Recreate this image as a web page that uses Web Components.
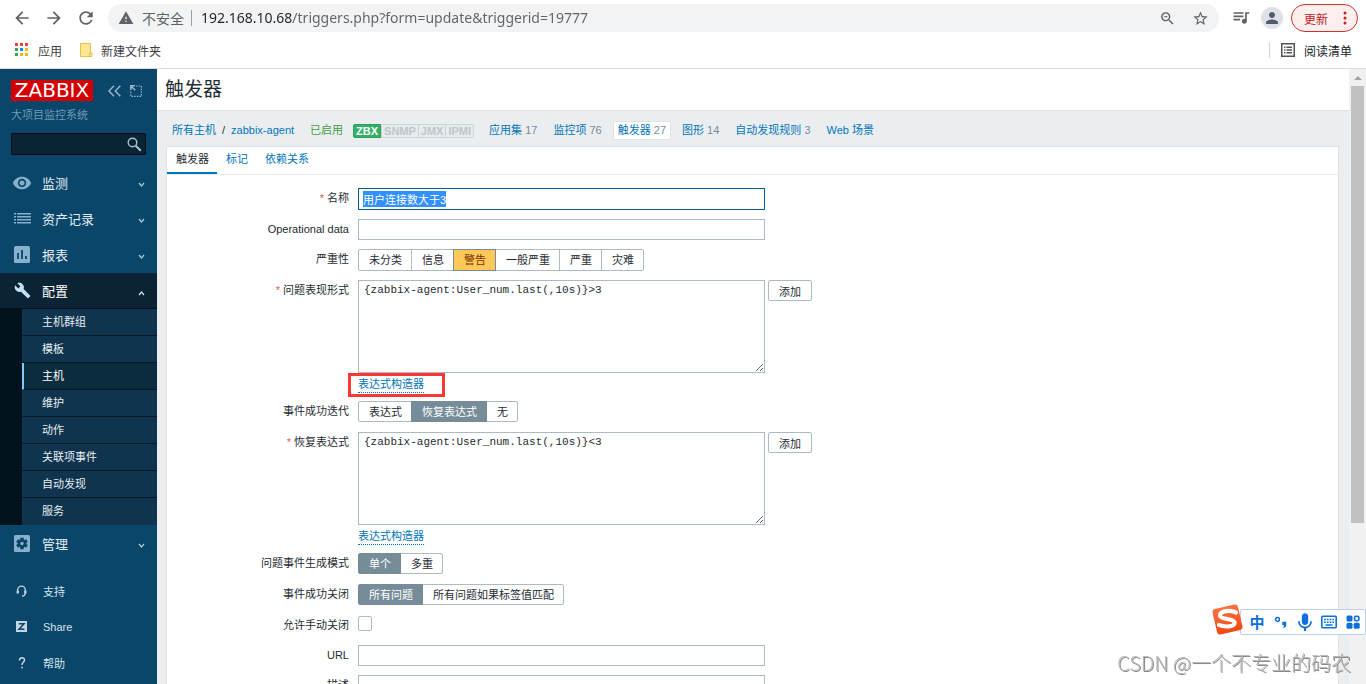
<!DOCTYPE html>
<html lang="zh-CN">
<head>
<meta charset="utf-8">
<title>触发器</title>
<style>
  html, body { height: 100%; margin: 0; }
  body {
    font-family: "Liberation Sans", "Noto Sans CJK SC", sans-serif;
    font-size: 11px;
    color: #1f2c33;
    overflow: hidden;
    --link: #0275b8;
    --line: #dfe4e7;
    --control: #acbbc2;
    --muted: #768d99;
  }
</style>
</head>
<body>
<app-window>
  <browser-toolbar slot="chrome"></browser-toolbar>
  <bookmark-bar slot="chrome"></bookmark-bar>
  <side-bar slot="side"></side-bar>
  <page-title>触发器</page-title>
  <host-nav></host-nav>
  <trigger-form></trigger-form>
  <scroll-track slot="scroll"></scroll-track>
</app-window>
<water-mark>CSDN @一个不专业的码农</water-mark>
<ime-bar></ime-bar>

<script>
const define = (name, html) => {
  const template = document.createElement('template');
  template.innerHTML = `<style>:host,*{box-sizing:border-box}a{color:inherit;text-decoration:none}button{font:inherit;color:inherit;background:none;border:0;padding:0;margin:0}ul{list-style:none;margin:0;padding:0}svg{display:block;flex:none}</style>` + html;
  customElements.define(name, class extends HTMLElement {
    constructor() {
      super();
      this.attachShadow({ mode: 'open' }).append(template.content.cloneNode(true));
    }
    connectedCallback() {
      const field = this.shadowRoot.querySelector('[data-selected]');
      if (field) { field.focus(); field.select(); }
    }
  });
};

define('app-window', `
<style>
  :host { display: grid; grid-template-rows: auto 1fr; height: 100vh; }
  .chrome { border-bottom: 1px solid #dadce0; background: #fff; }
  .body { display: grid; grid-template-columns: 157px 1fr auto; min-height: 0; overflow: hidden; background: #ebeef0; }
  main { min-width: 0; overflow: hidden; display: flex; flex-direction: column; }
</style>
<header class="chrome"><slot name="chrome"></slot></header>
<div class="body">
  <slot name="side"></slot>
  <main><slot></slot></main>
  <slot name="scroll"></slot>
</div>`);

define('browser-toolbar', `
<style>
  :host { display: flex; align-items: center; height: 36px; padding: 0 8px 0 12px; color: #5f6368; font-size: 14px; }
  .nav { display: flex; gap: 12px; margin-right: 12px; }
  .box { flex: 1; display: flex; align-items: center; height: 28px; border-radius: 14px; background: #f1f3f4; padding: 0 10px; min-width: 0; }
  .warn { margin-right: 8px; }
  .sep { width: 1px; height: 16px; background: #9aa0a6; margin: 0 9px 0 7px; }
  input { flex: 1; min-width: 0; border: 0; outline: 0; padding: 0; font: 14px/20px "Noto Sans", sans-serif;
    background: linear-gradient(90deg, #202124 92px, #5f6368 92px); -webkit-background-clip: text; background-clip: text; -webkit-text-fill-color: transparent; }
  .tools { display: flex; gap: 16px; }
  .queue { margin: 0 10px 0 12px; }
  .avatar { width: 22px; height: 22px; border-radius: 50%; background: #dee1e6; display: grid; place-items: center; color: #525c6e; margin-right: 8px; }
  .update { display: flex; align-items: center; justify-content: space-between; width: 67px; height: 28px; border: 1px solid #d0312d; border-radius: 14px; background: #fcefee; color: #c5221f; font-size: 12px; padding: 0 10px 0 12px; }
</style>
<div class="nav">
  <button aria-label="后退"><svg width="20" height="20" viewBox="0 0 24 24" fill="currentColor"><path d="M20 11H7.83l5.59-5.59L12 4l-8 8 8 8 1.41-1.41L7.83 13H20v-2z"/></svg></button>
  <button aria-label="前进"><svg width="20" height="20" viewBox="0 0 24 24" fill="currentColor"><path d="M12 4l-1.41 1.41L16.17 11H4v2h12.17l-5.58 5.59L12 20l8-8z"/></svg></button>
  <button aria-label="刷新"><svg width="20" height="20" viewBox="0 0 24 24" fill="currentColor"><path d="M17.65 6.35C16.2 4.9 14.21 4 12 4c-4.42 0-7.99 3.58-7.99 8s3.57 8 7.99 8c3.73 0 6.84-2.55 7.73-6h-2.08c-.82 2.33-3.04 4-5.65 4-3.31 0-6-2.69-6-6s2.69-6 6-6c1.66 0 3.14.69 4.22 1.78L13 11h7V4l-2.35 2.35z"/></svg></button>
</div>
<div class="box">
  <svg class="warn" width="16" height="16" viewBox="0 0 24 24" fill="currentColor"><path d="M1 21h22L12 2 1 21zm12-3h-2v-2h2v2zm0-4h-2v-4h2v4z"/></svg>
  <span>不安全</span><span class="sep"></span>
  <input aria-label="地址" value="192.168.10.68/triggers.php?form=update&amp;triggerid=19777">
  <div class="tools">
    <button aria-label="缩放"><svg width="17" height="17" viewBox="0 0 24 24" fill="currentColor"><path d="M15.5 14h-.79l-.28-.27C15.41 12.59 16 11.11 16 9.5 16 5.91 13.09 3 9.5 3S3 5.91 3 9.5 5.91 16 9.5 16c1.61 0 3.09-.59 4.23-1.57l.27.28v.79l5 4.99L20.49 19l-4.99-5zm-6 0C7.01 14 5 11.99 5 9.5S7.01 5 9.5 5 14 7.01 14 9.5 11.99 14 9.5 14zM7 8.7h5v1.6H7z"/></svg></button>
    <button aria-label="收藏"><svg width="17" height="17" viewBox="0 0 24 24" fill="currentColor"><path d="M22 9.24l-7.19-.62L12 2 9.19 8.63 2 9.24l5.46 4.73L5.82 21 12 17.27 18.18 21l-1.63-7.03L22 9.24zM12 15.4l-3.76 2.27 1-4.28-3.32-2.88 4.38-.38L12 6.1l1.71 4.04 4.38.38-3.32 2.88 1 4.28L12 15.4z"/></svg></button>
  </div>
</div>
<button class="queue" aria-label="媒体"><svg width="20" height="20" viewBox="0 0 24 24" fill="currentColor"><path d="M15 5H3v2h12V5zm0 4H3v2h12V9zM3 15h8v-2H3v2zM17 5v8.18c-.31-.11-.65-.18-1-.18-1.66 0-3 1.34-3 3s1.34 3 3 3 3-1.34 3-3V7h3V5h-5z"/></svg></button>
<button class="avatar" aria-label="用户"><svg width="18" height="18" viewBox="0 0 24 24" fill="currentColor"><path d="M12 12c2.21 0 4-1.79 4-4s-1.79-4-4-4-4 1.79-4 4 1.79 4 4 4zm0 2c-2.67 0-8 1.34-8 4v2h16v-2c0-2.66-5.33-4-8-4z"/></svg></button>
<button class="update">更新<svg width="4" height="14" viewBox="0 0 4 14" fill="currentColor"><circle cx="2" cy="2" r="1.5"/><circle cx="2" cy="7" r="1.5"/><circle cx="2" cy="12" r="1.5"/></svg></button>`);

define('bookmark-bar', `
<style>
  :host { display: flex; align-items: center; height: 32px; padding: 0 14px 4px; font-size: 12px; color: #3c4043; }
  a { display: flex; align-items: center; }
  .apps { gap: 10px; margin-right: 18px; }
  .folder { gap: 8px; }
  .reading { gap: 9px; margin-left: auto; padding-left: 11px; border-left: 1px solid #d0d2d5; height: 16px; color: #202124; }
</style>
<a class="apps" href="#"><svg width="14" height="14" viewBox="0 0 14 14"><path fill="#ea4335" d="M1 0h3v3H1zM6 0h3v3H6zM11 0h3v3h-3z"/><path fill="#34a853" d="M1 5h3v3H1zM1 10h3v3H1z"/><path fill="#1a8cff" d="M6 5h3v3H6z"/><path fill="#fbbc05" d="M11 5h3v3h-3zM6 10h3v3H6zM11 10h3v3h-3z"/></svg>应用</a>
<a class="folder" href="#"><svg width="13" height="14" viewBox="0 0 13 14"><path d="M.5.5h10v9.500h1.500v3.500H.5z" fill="#ffe793" stroke="#e8c04c"/><path d="M9.500 13.500v-3.500h1" fill="none" stroke="#e8c04c"/></svg>新建文件夹</a>
<a class="reading" href="#"><svg width="14" height="14" viewBox="0 0 14 14" fill="#50545a"><path d="M0 0h14v14H0zM1.500 1.500v11h11v-11z" fill-rule="evenodd"/><path d="M3 3.500h1.500V5H3zM5.500 3.500H11V5H5.500zM3 6.300h1.500v1.500H3zM5.500 6.300H11v1.500H5.500zM3 9h1.500v1.500H3zM5.500 9H11v1.500H5.500z"/></svg>阅读清单</a>`);

define('menu-item', `
<style>
  :host { display: block; }
  a { display: flex; align-items: center; height: 35px; padding: 0 11px 0 12px; font-size: 13px; color: #e2edf4; }
  .icon { width: 20px; margin-right: 10px; color: #86b0cb; display: grid; place-items: center; }
  .label { flex: 1; }
  .arrow { margin-top: 4px; color: #a9c8dc; }
  :host([open]) a { background: #0a2435; color: #fff; }
  :host([open]) .icon, :host([open]) .arrow { color: #c3dff2; }
  :host([open]) .arrow { transform: rotate(180deg); }
  :host([small]) a { font-size: 11px; color: #d3e3ed; padding-left: 12px; }
  :host([small]) .icon { width: 19px; margin-right: 12px; color: #c1d7e4; }
  :host([small]) .arrow { display: none; }
</style>
<a href="#"><span class="icon"><slot name="icon"></slot></span><span class="label"><slot></slot></span>
<svg class="arrow" width="9" height="6" viewBox="0 0 9 6" fill="none" stroke="currentColor" stroke-width="1.300"><path d="M2 1l2.500 3L7 1"/></svg></a>`);

define('side-bar', `
<style>
  :host { display: flex; flex-direction: column; background: #0a466a; padding-top: 11px; overflow: hidden; }
  .brand { display: flex; align-items: center; height: 21px; padding-left: 11px; color: #8fb6ce; }
  .logo { width: 82px; height: 21px; background: #d40000; color: #fff; font: 20px/21px "DejaVu Sans", sans-serif; text-align: center; margin-right: 15px; }
  .brand button + button { margin-left: 9px; }
  .server { padding-left: 11px; line-height: 16px; margin: 6px 0 10px; color: #6d9bb6; }
  form { display: flex; align-items: center; margin: 0 11px 10px; height: 22px; background: #082435; border: 1px solid #020c13; border-radius: 2px; color: #a9c2d1; padding-right: 3px; }
  form input { flex: 1; min-width: 0; height: 20px; background: none; border: 0; outline: 0; padding: 0 4px; font: inherit; color: #fff; }
  nav { display: flex; flex-direction: column; gap: 1px; }
  .sub { background: #02131e; padding: 1px 0 0 22px; }
  .sub a { display: block; height: 27px; line-height: 26px; padding-left: 20px; background: #10344e; border-bottom: 1px solid #04192a; color: #e6eef4; }
  .sub li[aria-current] a { background: #0b2b3f; border-left: 2px solid #84c8f5; padding-left: 18px; color: #fff; }
  .sub li:last-child a { border-bottom-color: #10344e; }
  .foot { margin-top: 11px; }
</style>
<div class="brand">
  <a class="logo" href="#">ZABBIX</a>
  <button aria-label="折叠"><svg width="13" height="12" viewBox="0 0 13 12" fill="none" stroke="currentColor" stroke-width="1.500"><path d="M6 .8L1 6l5 5.200M12.300.8L7.300 6l5 5.200"/></svg></button>
  <button aria-label="全屏"><svg width="12" height="12" viewBox="0 0 12 12" fill="none" stroke="currentColor" stroke-width="1.200"><path d="M6 1h5.400v10.400H.8V6.500" stroke-dasharray="1.500 1.200"/><path d="M1.200 1.200l4 4M.8 5V.8H5" stroke-width="1.500"/></svg></button>
</div>
<div class="server">大项目监控系统</div>
<form><input type="search" aria-label="搜索"><svg width="15" height="15" viewBox="0 0 15 15" fill="none" stroke="currentColor"><circle cx="5.500" cy="5.500" r="4.300" stroke-width="1.400"/><path d="M8.800 8.800l5 5" stroke-width="2"/></svg></form>
<nav>
  <menu-item><svg slot="icon" width="20" height="20" viewBox="0 0 24 24" fill="currentColor"><path d="M12 4.500C7 4.500 2.730 7.610 1 12c1.730 4.390 6 7.500 11 7.500s9.270-3.110 11-7.500c-1.730-4.390-6-7.500-11-7.500zM12 17c-2.760 0-5-2.240-5-5s2.240-5 5-5 5 2.240 5 5-2.240 5-5 5zm0-8c-1.660 0-3 1.340-3 3s1.340 3 3 3 3-1.340 3-3-1.340-3-3-3z"/></svg>监测</menu-item>
  <menu-item><svg slot="icon" width="17" height="11" viewBox="0 0 17 11" fill="currentColor"><path d="M0 0h2v1.400H0zM3 0h14v1.400H3zM0 3h2v1.400H0zM3 3h14v1.400H3zM0 6h2v1.400H0zM3 6h14v1.400H3zM0 9h2v1.400H0zM3 9h14v1.400H3z"/></svg>资产记录</menu-item>
  <menu-item><svg slot="icon" width="16" height="17" viewBox="0 0 16 17"><rect width="16" height="17" rx="1.500" fill="currentColor"/><path d="M4 7v6M8 4v9M12 10v3" stroke="#0a466a" stroke-width="1.800"/></svg>报表</menu-item>
  <div>
    <menu-item open><svg slot="icon" width="17" height="17" viewBox="0 0 24 24" fill="currentColor"><path d="M22.700 19l-9.100-9.100c.9-2.300.4-5-1.500-6.900-2-2-5-2.400-7.400-1.300L9 6 6 9 1.600 4.700C.4 7.100.9 10.100 2.900 12.100c1.900 1.900 4.600 2.400 6.900 1.500l9.100 9.100c.4.400 1 .4 1.400 0l2.300-2.300c.5-.4.5-1.100.1-1.400z"/></svg>配置</menu-item>
    <ul class="sub">
      <li><a href="#">主机群组</a></li><li><a href="#">模板</a></li><li aria-current="page"><a href="#">主机</a></li><li><a href="#">维护</a></li>
      <li><a href="#">动作</a></li><li><a href="#">关联项事件</a></li><li><a href="#">自动发现</a></li><li><a href="#">服务</a></li>
    </ul>
  </div>
  <menu-item><svg slot="icon" width="16" height="17" viewBox="0 0 16 17"><rect width="16" height="17" rx="1.500" fill="currentColor"/><g stroke="#0a466a" stroke-width="3.400"><path d="M8 2.700v11.600M3 5.600l10 5.800M3 11.400l10-5.800"/></g><circle cx="8" cy="8.500" r="4.400" fill="#0a466a"/><circle cx="8" cy="8.500" r="1.700" fill="#86b0cb"/></svg>管理</menu-item>
  <menu-item small class="foot"><svg slot="icon" width="11" height="12" viewBox="0 0 11 12" fill="none" stroke="currentColor" stroke-width="1.300"><path d="M1.700 8V5a3.800 3.800 0 0 1 7.600 0v3c0 2-1 3-3.300 3"/><path d="M1.700 5.500v3M9.300 5.500v3" stroke-width="2.200"/></svg>支持</menu-item>
  <menu-item small><svg slot="icon" width="11" height="11" viewBox="0 0 11 11"><rect width="11" height="11" fill="currentColor"/><path d="M2.800 2.800h5.200L3 8.200h5.400" fill="none" stroke="#0a466a" stroke-width="1.500"/></svg>Share</menu-item>
  <menu-item small><svg slot="icon" width="8" height="12" viewBox="0 0 8 12" fill="none" stroke="currentColor" stroke-width="1.500"><path d="M1.500 3.500C1.500 0 6.500 0 6.500 3.200 6.500 5 4 5.300 4 8M4 9.800v1.700"/></svg>帮助</menu-item>
</nav>`);

define('page-title', `
<style>
  :host { display: block; flex: none; height: 42px; background: #fff; border-bottom: 1px solid var(--line); padding-left: 8px; }
  h1 { margin: 0; font-size: 19px; line-height: 41px; font-weight: 400; }
</style>
<h1><slot></slot></h1>`);

define('host-nav', `
<style>
  :host { display: flex; flex: none; align-items: center; gap: 6px; height: 35px; padding: 4px 10px 0; color: var(--link); }
  .item { border: 1px solid transparent; padding: 0 4px; line-height: 17px; white-space: nowrap; }
  .item span { color: var(--muted); }
  .on { background: #fff; border-color: var(--line); }
  .path { display: flex; gap: 6px; }
  .path span { color: #1f2c33; }
  .enabled { color: #429e47; }
  .status { display: flex; font-weight: 700; line-height: 12px; color: #bcc6cb; border: 1px solid #ccd5d9; border-radius: 2px; background: #e8ebec; margin: 0 4px 0 -1px; }
  .status span { padding: 0 2px; border-left: 1px solid #ccd5d9; }
  .status .ok { background: #34af67; color: #fff; border: 1px solid #2f9f5e; margin: -1px 0 -1px -1px; border-radius: 2px 0 0 2px; }
</style>
<div class="item path"><a href="#">所有主机</a><span>/</span><a href="#">zabbix-agent</a></div>
<div class="item enabled">已启用</div>
<div class="status"><span class="ok">ZBX</span><span>SNMP</span><span>JMX</span><span>IPMI</span></div>
<a class="item" href="#">应用集 <span>17</span></a>
<a class="item" href="#">监控项 <span>76</span></a>
<a class="item on" href="#">触发器 <span>27</span></a>
<a class="item" href="#">图形 <span>14</span></a>
<a class="item" href="#">自动发现规则 <span>3</span></a>
<a class="item" href="#">Web 场景</a>`);

define('form-row', `
<style>
  :host { display: grid; grid-template-columns: 182px 1fr; column-gap: 9px; align-items: start; }
  .label { text-align: right; line-height: 21px; }
  :host([required]) .label::before { content: "* "; color: #e45959; }
  .field { display: flex; align-items: flex-start; gap: 3px; }
</style>
<div class="label"><slot name="label"></slot></div><div class="field"><slot></slot></div>`);

customElements.define('radio-group', class extends HTMLElement {
  connectedCallback() {
    const name = this.getAttribute('name');
    const options = this.getAttribute('options').split(',');
    const value = this.getAttribute('value');
    this.setAttribute('role', 'radiogroup');
    this.attachShadow({ mode: 'open' }).innerHTML = `
<style>
  :host { display: flex; height: 21px; margin-bottom: 1px; }
  :host([tone="warning"]) { height: 22px; margin-bottom: 0; --on: #ffc859; --on-text: #733100; --on-edge: #768d99; }
  label { position: relative; box-sizing: border-box; border: 1px solid var(--control); padding: 0 9px 0 10px; line-height: 20px; margin-left: -1px; }
  label:first-of-type { margin-left: 0; border-radius: 2px 0 0 2px; }
  label:last-of-type { border-radius: 0 2px 2px 0; }
  input { position: absolute; inset: 0; margin: 0; opacity: 0; }
  label:has(:checked) { z-index: 1; background: var(--on, #768d99); border-color: var(--on-edge, #768d99); color: var(--on-text, #fff); }
</style>` + options.map(text => `<label><input type="radio" name="${name}"${text === value ? ' checked' : ''}>${text}</label>`).join('');
  }
});

define('trigger-form', `
<style>
  :host { display: flex; flex: 1 0 auto; flex-direction: column; margin: 0 10px 0 9px; background: #fff; border: 1px solid var(--line); }
  .tabs { display: flex; height: 28px; border-bottom: 1px solid #ebeef0; color: var(--link); }
  .tabs a { padding: 0 8px 0 9px; line-height: 25px; height: 27px; }
  .tabs .on { color: #1f2c33; border-bottom: 2px solid #0275b8; }
  form { display: flex; flex-direction: column; gap: 9px; padding-top: 13px; }
  input[type=text], textarea { width: 407px; display: block; margin: 0; border: 1px solid var(--control); border-radius: 0; background: #fff; color: inherit; outline: 0; }
  input[type=text] { height: 21px; padding: 0 4px; font: inherit; }
  input[type=text]:focus, input[type=text][data-selected] { height: 22px; border-color: #00618f; }
  ::selection { background: #3390ff; color: #fff; }
  textarea { height: 93px; padding: 3px 5px; font: 11px/13px "Liberation Mono", monospace; resize: both; }
  input[type=checkbox] { appearance: none; width: 14px; height: 15px; margin: 1px 0 5px; border: 1px solid var(--control); border-radius: 2px; background: #fff; }
  .add { height: 21px; width: 44px; border: 1px solid var(--control); border-radius: 2px; }
  .stack { display: flex; flex-direction: column; align-items: flex-start; }
  .builder { color: var(--link); line-height: 15px; border-bottom: 1px dotted var(--link); margin: 4px 0 0; }
  .marked { position: relative; }
  .marked::after { content: ""; position: absolute; left: -10px; top: -4px; width: 91px; height: 18px; border: 3px solid #fb3838; box-sizing: content-box; }
  .tall { height: 112px; }
</style>
<nav class="tabs"><a class="on" href="#">触发器</a><a href="#">标记</a><a href="#">依赖关系</a></nav>
<form>
  <form-row required><label slot="label" for="name">名称</label><input id="name" type="text" value="用户连接数大于3" data-selected></form-row>
  <form-row><label slot="label" for="opdata">Operational data</label><input id="opdata" type="text"></form-row>
  <form-row><span slot="label">严重性</span><radio-group aria-label="严重性" name="severity" tone="warning" options="未分类,信息,警告,一般严重,严重,灾难" value="警告"></radio-group></form-row>
  <form-row required class="tall"><label slot="label" for="expr">问题表现形式</label>
    <div class="stack"><textarea id="expr" spellcheck="false">{zabbix-agent:User_num.last(,10s)}&gt;3</textarea><a class="builder marked" href="#">表达式构造器</a></div><button type="button" class="add">添加</button></form-row>
  <form-row><span slot="label">事件成功迭代</span><radio-group aria-label="事件成功迭代" name="recovery" options="表达式,恢复表达式,无" value="恢复表达式"></radio-group></form-row>
  <form-row required class="tall"><label slot="label" for="rexpr">恢复表达式</label>
    <div class="stack"><textarea id="rexpr" spellcheck="false">{zabbix-agent:User_num.last(,10s)}&lt;3</textarea><a class="builder" href="#">表达式构造器</a></div><button type="button" class="add">添加</button></form-row>
  <form-row><span slot="label">问题事件生成模式</span><radio-group aria-label="问题事件生成模式" name="mode" options="单个,多重" value="单个"></radio-group></form-row>
  <form-row><span slot="label">事件成功关闭</span><radio-group aria-label="事件成功关闭" name="close" options="所有问题,所有问题如果标签值匹配" value="所有问题"></radio-group></form-row>
  <form-row><label slot="label" for="manual">允许手动关闭</label><input id="manual" type="checkbox"></form-row>
  <form-row><label slot="label" for="url">URL</label><input id="url" type="text"></form-row>
  <form-row><label slot="label" for="desc">描述</label><textarea id="desc"></textarea></form-row>
</form>`);

define('scroll-track', `
<style>
  :host { display: flex; flex-direction: column; align-items: center; width: 17px; background: #f1f1f1; }
  svg { margin: 7px 0 6px; }
  .thumb { width: 13px; height: 71%; background: #c1c1c1; }
</style>
<svg width="8" height="4" viewBox="0 0 8 4" fill="#a3a3a3"><path d="M0 4l4-4 4 4z"/></svg><div class="thumb"></div>`);

define('water-mark', `
<style>
  :host { position: fixed; right: 15px; bottom: 7px; font: 20px/28px "Noto Sans CJK SC", sans-serif; font-weight: 300; color: #b9b9b9; text-shadow: 1px 1px 0 #8a8a8a; white-space: nowrap; }
</style><slot></slot>`);

define('ime-bar', `
<style>
  :host { position: fixed; right: 0; bottom: 49px; display: flex; align-items: center; gap: 8px; height: 26px; width: 126px; justify-content: flex-end; padding-right: 4px; background: #fff; border: 1px solid #b9cfec; border-radius: 2px; color: #0b6fdc; }
  .mode { width: 16px; font: 700 15px/20px "Noto Sans CJK SC", sans-serif; text-align: center; color: #0b6fdc; }
  .logo { position: absolute; left: -30px; top: -7px; }
</style>
<svg class="logo" width="33" height="33" viewBox="0 0 33 33"><defs><linearGradient id="g" x1="0" y1="0" x2="0" y2="1"><stop offset="0" stop-color="#fd7043"/><stop offset="1" stop-color="#f04a10"/></linearGradient></defs><rect x="3.500" y="3.500" width="26" height="26" rx="3" fill="url(#g)" transform="rotate(-13 16.500 16.500)"/><path d="M25 9.500C19 6.500 9.500 8 9 12.300c-.4 4.300 15 3 14.600 7.600-.3 4-9.600 4.600-15.600 2" fill="none" stroke="#fff" stroke-width="4.200" stroke-linecap="round"/></svg>
<button class="mode">中</button>
<button aria-label="标点"><svg width="16" height="16" viewBox="0 0 16 16"><circle cx="4.500" cy="5.500" r="1.900" fill="none" stroke="currentColor" stroke-width="1.500"/><path d="M9.300 7.800h3.900v3.200c0 1.500-1 2.700-3 3v-1.300c.8-.3 1-.8 1-1.500H9.300z" fill="currentColor"/></svg></button>
<button aria-label="语音"><svg width="16" height="18" viewBox="3 1 18 21" fill="currentColor"><path d="M12 15c2.200 0 3.700-1.500 3.700-3.700V5C15.700 2.900 14.200 1.300 12 1.300S8.300 2.900 8.300 5v6.300C8.300 13.500 9.800 15 12 15z"/><path d="M18 10.500c0 4-2.500 6.300-6 6.300s-6-2.300-6-6.300H4c0 4.500 3 7.600 6.800 8.200V22h2.400v-3.300C17 18.100 20 15 20 10.500z"/></svg></button>
<button aria-label="键盘"><svg width="16" height="16" viewBox="0 0 16 16"><rect x=".8" y="2.300" width="14.400" height="11.400" rx="1" fill="none" stroke="currentColor" stroke-width="1.600"/><path d="M3 5.500h10M3 8.200h10" stroke="currentColor" stroke-width="1.600" stroke-dasharray="1.800 1"/><path d="M4.500 11h7" stroke="currentColor" stroke-width="1.500"/></svg></button>
<button aria-label="工具箱"><svg width="16" height="16" viewBox="0 0 16 16" fill="currentColor"><rect x="1.500" y="1.500" width="6" height="6" rx="1.500"/><rect x="1.500" y="8.700" width="6" height="6" rx="1.500"/><rect x="8.700" y="8.700" width="6" height="6" rx="1.500"/><rect x="9.500" y="2.300" width="4.400" height="4.400" rx="1.500" fill="none" stroke="currentColor" stroke-width="1.600"/></svg></button>`);
</script>
</body>
</html>
